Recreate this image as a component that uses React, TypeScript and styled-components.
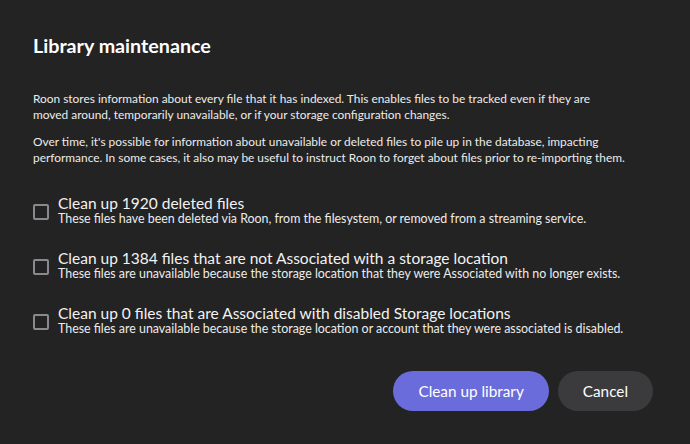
import React, { useState } from "react";
import styled, { createGlobalStyle } from "styled-components";

const GlobalStyle = createGlobalStyle`
  html, body {
    margin: 0;
    padding: 0;
    background: #232323;
  }
  body {
    font-family: Lato, "Noto Sans", sans-serif;
    color: #ececec;
  }
`;

const Dialog = styled.div`
  width: 690px;
  height: 444px;
  box-sizing: border-box;
  padding: 34px 37px 0 33px;
  background: #232323;
  display: flex;
  flex-direction: column;
`;

const Title = styled.h2`
  margin: 0;
  font-size: 19.7px;
  line-height: 24px;
  font-weight: 700;
  color: #ffffff;
`;

const Intro = styled.div`
  margin-top: 33px;
  display: flex;
  flex-direction: column;
  gap: 12px;
`;

const Paragraph = styled.p`
  margin: 0;
  font-size: 11.9px;
  line-height: 15.5px;
  color: #ececec;
`;

const OptionList = styled.div`
  margin-top: 29px;
  display: flex;
  flex-direction: column;
  gap: 23px;
`;

const OptionRow = styled.label`
  display: flex;
  align-items: flex-start;
  gap: 9px;
  cursor: pointer;
`;

const Box = styled.span<{ $checked: boolean }>`
  flex: none;
  width: 16px;
  height: 16px;
  margin-top: 10px;
  box-sizing: border-box;
  border: 2px solid ${(p) => (p.$checked ? "#6c6ddb" : "#8a8a8e")};
  border-radius: 2px;
  background: ${(p) => (p.$checked ? "#6c6ddb" : "transparent")};
`;

const OptionText = styled.div`
  display: flex;
  flex-direction: column;
`;

const OptionTitle = styled.span`
  font-size: 15.5px;
  line-height: 18px;
  color: #f2f2f2;
`;

const OptionDesc = styled.span`
  font-size: 12.4px;
  line-height: 14px;
  color: #ececec;
`;

const Actions = styled.div`
  margin-top: 35px;
  display: flex;
  justify-content: flex-end;
  gap: 9px;
`;

const Button = styled.button<{ $primary?: boolean }>`
  height: 40px;
  padding: 0 25px;
  border: none;
  border-radius: 20px;
  font-family: Lato, "Noto Sans", sans-serif;
  font-size: 15.3px;
  color: #ffffff;
  background: ${(p) => (p.$primary ? "#6b6cdb" : "#3b3b3d")};
  cursor: pointer;
`;

const options = [
  {
    title: "Clean up 1920 deleted files",
    desc: "These files have been deleted via Roon, from the filesystem, or removed from a streaming service.",
  },
  {
    title: "Clean up 1384 files that are not Associated with a storage location",
    desc: "These files are unavailable because the storage location that they were Associated with no longer exists.",
  },
  {
    title: "Clean up 0 files that are Associated with disabled Storage locations",
    desc: "These files are unavailable because the storage location or account that they were associated is disabled.",
  },
];

const App: React.FC = () => {
  const [checked, set_checked] = useState<boolean[]>([false, false, false]);

  const toggle = (index: number) => {
    set_checked(checked.map((c, i) => (i === index ? !c : c)));
  };

  return (
    <>
      <GlobalStyle />
      <Dialog>
        <Title>Library maintenance</Title>
        <Intro>
          <Paragraph>
            Roon stores information about every file that it has indexed. This
            enables files to be tracked even if they are
            <br />
            moved around, temporarily unavailable, or if your storage
            configuration changes.
          </Paragraph>
          <Paragraph>
            Over time, it's possible for information about unavailable or
            deleted files to pile up in the database, impacting performance. In
            some cases, it also may be useful to instruct Roon to forget about
            files prior to re-importing them.
          </Paragraph>
        </Intro>
        <OptionList>
          {options.map((one_option, index) => (
            <OptionRow key={index} onClick={() => toggle(index)}>
              <Box $checked={checked[index]} />
              <OptionText>
                <OptionTitle>{one_option.title}</OptionTitle>
                <OptionDesc>{one_option.desc}</OptionDesc>
              </OptionText>
            </OptionRow>
          ))}
        </OptionList>
        <Actions>
          <Button $primary>Clean up library</Button>
          <Button>Cancel</Button>
        </Actions>
      </Dialog>
    </>
  );
};

export default App;
